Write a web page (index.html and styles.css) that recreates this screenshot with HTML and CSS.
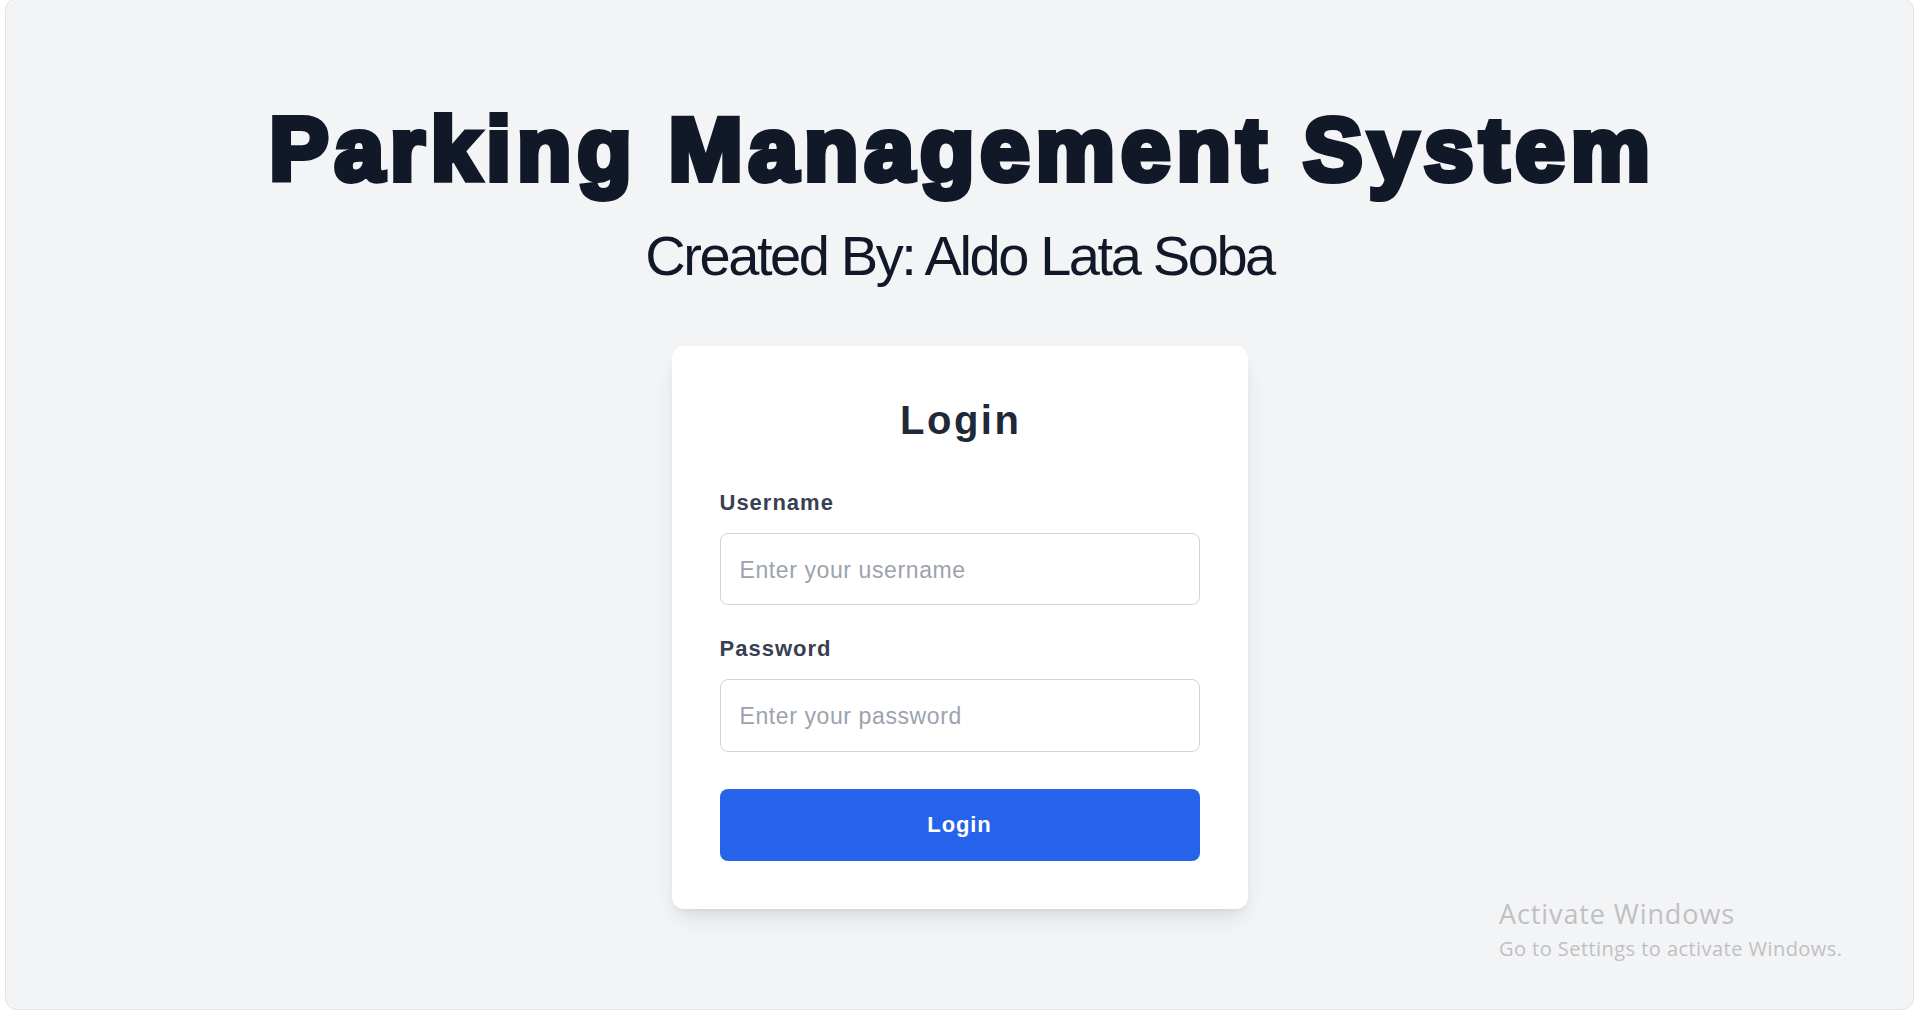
FILE: index.html
```html
<!DOCTYPE html>
<html lang="en">
<head>
<meta charset="utf-8">
<title>Parking Management System</title>
<link rel="stylesheet" href="styles.css">
</head>
<body>
  <div class="frame">
    <main class="page">
      <h1 class="title">Parking Management System</h1>
      <p class="subtitle">Created By: Aldo Lata Soba</p>
      <form class="card">
        <h2 class="card-title">Login</h2>
        <div class="field">
          <label class="label" for="username">Username</label>
          <input class="input" id="username" type="text" placeholder="Enter your username">
        </div>
        <div class="field field-last">
          <label class="label" for="password">Password</label>
          <input class="input input-tall" id="password" type="password" placeholder="Enter your password">
        </div>
        <button class="btn" type="button">Login</button>
      </form>
    </main>
    <div class="watermark">
      <div class="wm-title">Activate Windows</div>
      <div class="wm-sub">Go to Settings to activate Windows.</div>
    </div>
  </div>
</body>
</html>
```

FILE: styles.css
```css
html, body {
  margin: 0;
  padding: 0;
  height: 100%;
  background: #ffffff;
  overflow: hidden;
}

.frame {
  box-sizing: border-box;
  position: relative;
  margin: -2px 4px 0 5px;
  height: 1012px;
  border: 1px solid #e1e3e7;
  border-radius: 12px;
  background: #f3f4f6;
}

.page {
  display: flex;
  flex-direction: column;
  align-items: center;
  padding-top: 106px;
  font-family: "Liberation Sans", Arial, sans-serif;
}

.title {
  margin: 0;
  padding-left: 6px;
  font-size: 89px;
  line-height: 89px;
  font-weight: 700;
  letter-spacing: 6px;
  color: #111827;
  -webkit-text-stroke: 6px #111827;
  white-space: nowrap;
}

.subtitle {
  margin: 34px 0 0;
  font-size: 56px;
  line-height: 56px;
  font-weight: 400;
  letter-spacing: -2.4px;
  color: #111827;
  white-space: nowrap;
}

.card {
  box-sizing: border-box;
  width: 576px;
  margin-top: 62px;
  padding: 48px;
  background: #ffffff;
  border-radius: 12px;
  box-shadow: 0 12px 24px -6px rgba(0, 0, 0, 0.12), 0 4px 8px -4px rgba(0, 0, 0, 0.08);
}

.card-title {
  margin: 6px 0 49px;
  padding-left: 2.5px;
  font-size: 40px;
  line-height: 40px;
  font-weight: 700;
  letter-spacing: 2.5px;
  text-align: center;
  color: #1f2937;
}

.field {
  margin-bottom: 30px;
}

.field-last {
  margin-bottom: 37px;
}

.label {
  display: block;
  margin-bottom: 16px;
  font-size: 22px;
  line-height: 28px;
  font-weight: 700;
  letter-spacing: 1px;
  color: #374151;
}

.input {
  box-sizing: border-box;
  display: block;
  width: 100%;
  height: 72px;
  padding: 2px 19px 0;
  border: 1px solid #d1d5db;
  border-radius: 8px;
  background: #ffffff;
  font-family: "Liberation Sans", Arial, sans-serif;
  font-size: 23px;
  letter-spacing: 0.6px;
  color: #111827;
  outline: none;
}

.input-tall {
  height: 73px;
}

.input::placeholder {
  color: #9ca3af;
}

.btn {
  display: block;
  width: 100%;
  height: 72px;
  border: none;
  border-radius: 8px;
  background: #2563eb;
  color: #ffffff;
  font-family: "Liberation Sans", Arial, sans-serif;
  font-size: 22px;
  font-weight: 700;
  letter-spacing: 0.9px;
  cursor: pointer;
}

.watermark {
  position: absolute;
  left: 1493px;
  top: 899px;
  font-family: "Open Sans", "Noto Sans", sans-serif;
  color: #bfc0c2;
  white-space: nowrap;
}

.wm-title {
  font-size: 27px;
  line-height: 32px;
  letter-spacing: 0.9px;
}

.wm-sub {
  margin-top: 7px;
  font-size: 20px;
  line-height: 24px;
  letter-spacing: 0.45px;
}
```
